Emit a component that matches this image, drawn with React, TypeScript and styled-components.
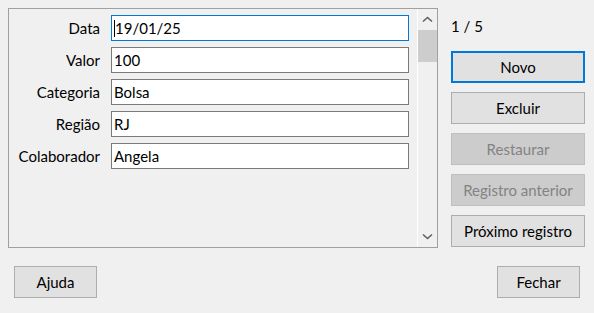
import React from 'react';
import styled, { createGlobalStyle } from 'styled-components';

const GlobalStyle = createGlobalStyle`
  html, body {
    margin: 0;
    padding: 0;
    background: #f0f0f0;
  }
  * {
    box-sizing: border-box;
  }
`;

const Dialog = styled.div`
  width: 594px;
  height: 313px;
  background: #f0f0f0;
  font-family: Lato, 'Noto Sans', sans-serif;
  font-size: 15px;
  color: #000;
  display: flex;
  flex-direction: column;
  padding: 8px 9px 0 8px;
`;

const TopArea = styled.div`
  display: flex;
  gap: 13px;
`;

const FormPanel = styled.div`
  width: 430px;
  height: 240px;
  border: 1px solid #a0a0a0;
  display: flex;
`;

const Fields = styled.div`
  flex: 1;
  display: flex;
  flex-direction: column;
  gap: 6px;
  padding: 6px 0 0 0;
`;

const FieldRow = styled.div`
  display: grid;
  grid-template-columns: 91px 298px;
  column-gap: 11px;
  align-items: center;
`;

const Label = styled.span`
  text-align: right;
  white-space: nowrap;
`;

const Field = styled.div<{ focused?: boolean }>`
  height: 26px;
  background: #fff;
  border: 1px solid ${({ focused }) => (focused ? '#0078d7' : '#7a7a7a')};
  padding: 0 0 0 2px;
  display: flex;
  align-items: center;
  white-space: nowrap;
`;

const Caret = styled.span`
  display: inline-block;
  width: 1px;
  height: 17px;
  background: #000;
`;

const ScrollBar = styled.div`
  width: 20px;
  border-left: 1px solid #ffffff;
  display: flex;
  flex-direction: column;
  align-items: stretch;
`;

const ArrowBox = styled.div`
  height: 21px;
  display: flex;
  align-items: center;
  justify-content: center;
`;

const Thumb = styled.div`
  height: 32px;
  background: #cdcdcd;
`;

const Track = styled.div`
  flex: 1;
`;

const SideColumn = styled.div`
  width: 134px;
  display: flex;
  flex-direction: column;
  gap: 9px;
`;

const Counter = styled.div`
  height: 34px;
  display: flex;
  align-items: center;
  padding-top: 2px;
`;

const DialogButton = styled.div<{ primary?: boolean; disabled?: boolean; width?: number }>`
  width: ${({ width }) => width || 134}px;
  height: 32px;
  display: flex;
  align-items: center;
  justify-content: center;
  background: ${({ disabled }) => (disabled ? '#cccccc' : '#e1e1e1')};
  border: ${({ primary }) => (primary ? 2 : 1)}px solid
    ${({ primary, disabled }) =>
      primary ? '#0078d7' : disabled ? '#bfbfbf' : '#adadad'};
  color: ${({ disabled }) => (disabled ? '#838383' : '#000')};
  white-space: nowrap;
`;

const BottomBar = styled.div`
  display: flex;
  justify-content: space-between;
  padding: 18px 5px 0 6px;
`;

const fields = [
  { label: 'Data', value: '19/01/25', focused: true },
  { label: 'Valor', value: '100' },
  { label: 'Categoria', value: 'Bolsa' },
  { label: 'Região', value: 'RJ' },
  { label: 'Colaborador', value: 'Angela' },
];

const Chevron = ({ down }: { down?: boolean }) => (
  <svg width="11" height="7" viewBox="0 0 11 7">
    <path
      d={down ? 'M1 1.5 L5.5 5.5 L10 1.5' : 'M1 5.5 L5.5 1.5 L10 5.5'}
      fill="none"
      stroke="#606060"
      strokeWidth="1.6"
    />
  </svg>
);

const App = () => (
  <Dialog>
    <GlobalStyle />
    <TopArea>
      <FormPanel>
        <Fields>
          {fields.map((f) => (
            <FieldRow key={f.label}>
              <Label>{f.label}</Label>
              <Field focused={f.focused}>
                {f.focused && <Caret />}
                {f.value}
              </Field>
            </FieldRow>
          ))}
        </Fields>
        <ScrollBar>
          <ArrowBox>
            <Chevron />
          </ArrowBox>
          <Thumb />
          <Track />
          <ArrowBox>
            <Chevron down />
          </ArrowBox>
        </ScrollBar>
      </FormPanel>
      <SideColumn>
        <Counter>1 / 5</Counter>
        <DialogButton primary>Novo</DialogButton>
        <DialogButton>Excluir</DialogButton>
        <DialogButton disabled>Restaurar</DialogButton>
        <DialogButton disabled>Registro anterior</DialogButton>
        <DialogButton>Próximo registro</DialogButton>
      </SideColumn>
    </TopArea>
    <BottomBar>
      <DialogButton width={83}>Ajuda</DialogButton>
      <DialogButton width={83}>Fechar</DialogButton>
    </BottomBar>
  </Dialog>
);

export default App;
